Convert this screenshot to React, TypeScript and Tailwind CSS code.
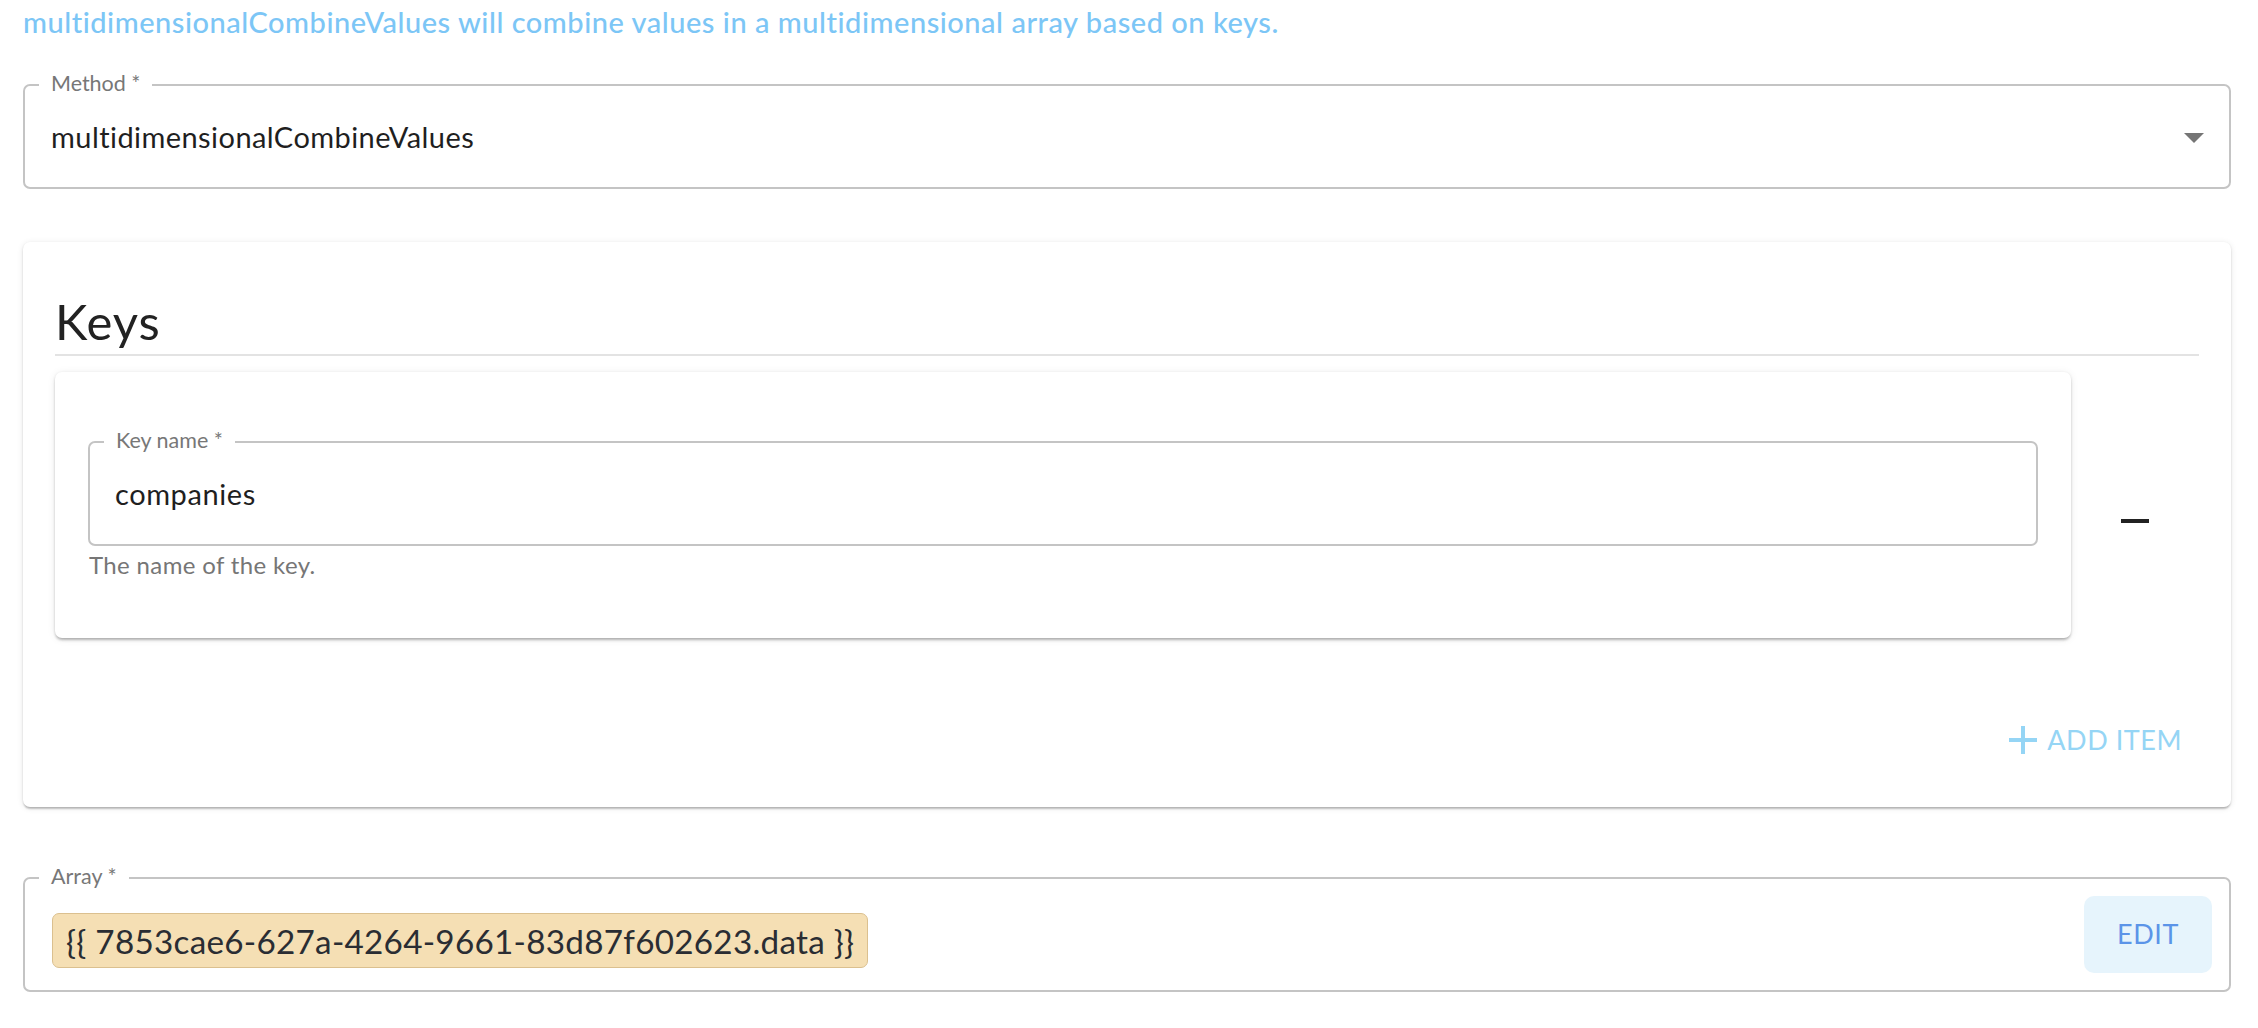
import React from "react";

function Outlined({
  label,
  className,
  children,
}: {
  label: string;
  className: string;
  children: React.ReactNode;
}) {
  return (
    <div className={"relative border-2 border-[#c4c4c4] rounded-[7px] flex items-center " + className}>
      <span className="absolute left-[14px] top-[-16px] px-[12px] bg-white text-[21.5px] leading-[26px] text-[#777777]">
        {label}
      </span>
      {children}
    </div>
  );
}

export default function App() {
  return (
    <div className="w-[2258px] h-[1028px] overflow-hidden bg-white pl-[23px] pr-[27px] font-['Lato',sans-serif]">
      <p className="pt-[5px] text-[29px] leading-[34px] font-medium tracking-[0.018em] text-[#7cc6f6]">
        multidimensionalCombineValues will combine values in a multidimensional array based on keys.
      </p>

      <Outlined label="Method *" className="mt-[45px] h-[105px] pl-[26px] pr-[25px] justify-between">
        <span className="text-[29px] leading-[34px] text-[#1f1f1f] tracking-[0.015em]">multidimensionalCombineValues</span>
        <svg width="20" height="10" viewBox="0 0 20 10" className="mt-[2px]">
          <polygon points="0,0 20,0 10,10" fill="#757575" />
        </svg>
      </Outlined>

      <div className="mt-[53px] bg-white rounded-[7px] px-[32px] pt-[51px] pb-[37px] shadow-[0_3px_2px_-1px_rgba(0,0,0,0.18),0_1px_2px_0_rgba(0,0,0,0.12),0_1px_6px_0_rgba(0,0,0,0.1)]">
        <h2 className="text-[49px] leading-[57px] text-[#222222] tracking-[0.02em]">Keys</h2>
        <div className="mt-[4px] h-[2px] bg-[#e3e3e3]" />

        <div className="mt-[16px] flex">
          <div className="w-[2016px] h-[266px] shrink-0 bg-white rounded-[7px] px-[33px] pt-[69px] shadow-[0_3px_3px_-1px_rgba(0,0,0,0.22),0_1px_3px_0_rgba(0,0,0,0.12),0_1px_8px_0_rgba(0,0,0,0.08)]">
            <Outlined label="Key name *" className="h-[105px] pl-[25px]">
              <span className="text-[29px] leading-[34px] text-[#1f1f1f] tracking-[0.02em]">companies</span>
            </Outlined>
            <p className="mt-[4px] ml-[1px] text-[24px] leading-[30px] text-[#767676] tracking-[0.015em]">
              The name of the key.
            </p>
          </div>
          <div className="flex-1 flex justify-center pt-[147px]">
            <div className="w-[28px] h-[4px] bg-[#222222]" />
          </div>
        </div>

        <div className="mt-[72px] flex justify-end pr-[17px]">
          <button className="h-[60px] flex items-center gap-[10px] text-[27px] tracking-[0.02em] text-[#95d5f5]">
            <svg width="28" height="28" viewBox="0 0 28 28">
              <rect x="12" y="0" width="4" height="28" fill="#95d5f5" />
              <rect x="0" y="12" width="28" height="4" fill="#95d5f5" />
            </svg>
            <span>ADD ITEM</span>
          </button>
        </div>
      </div>

      <Outlined label="Array *" className="mt-[70px] h-[115px] pl-[27px] pr-[17px] justify-between">
        <span className="mt-[12px] inline-flex items-center h-[55px] px-[13px] border-[1.5px] border-[#dbc08f] bg-[#f5dfb4] rounded-[7px] text-[33.25px] leading-[40px] tracking-[0.008em] text-[#2a2d33]">
          {"{{ 7853cae6-627a-4264-9661-83d87f602623.data }}"}
        </span>
        <button className="w-[128px] h-[77px] rounded-[10px] bg-[#e6f4fc] text-[27px] tracking-[0.02em] text-[#5b94e8]">
          EDIT
        </button>
      </Outlined>
    </div>
  );
}
